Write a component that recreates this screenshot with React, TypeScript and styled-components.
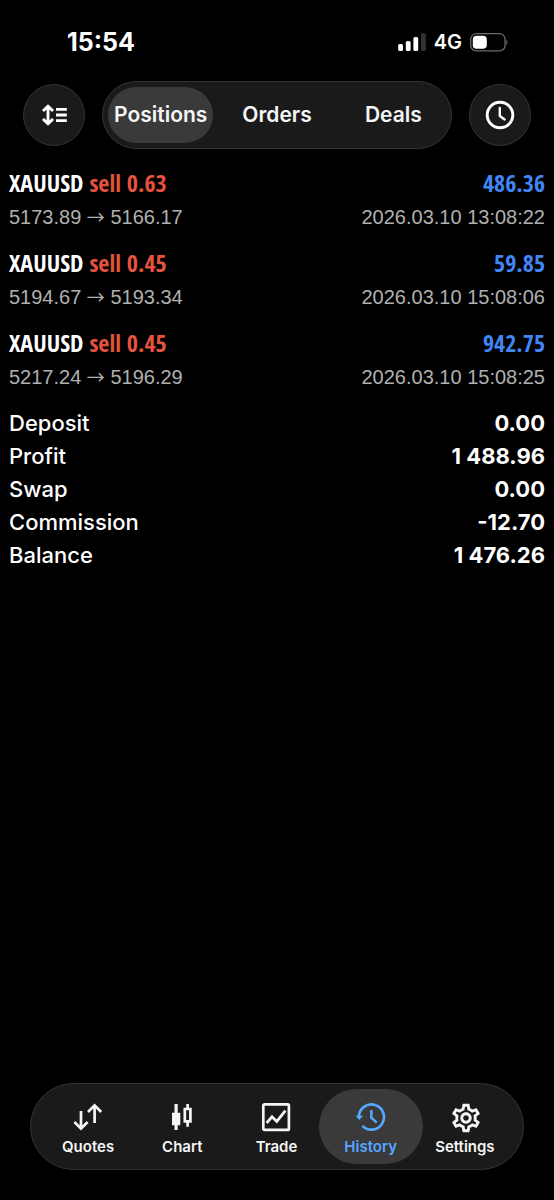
import React from "react";
import styled, { createGlobalStyle } from "styled-components";
import { MdOutlineSettings } from "react-icons/md";

const Global = createGlobalStyle`
  * { box-sizing: border-box; }
  html, body, #root { height: 100%; }
  body { margin: 0; background: #000; color: #fff; font-family: Inter, sans-serif; }
  button { font: inherit; color: inherit; border: 0; background: none; padding: 0; cursor: pointer; }
  svg { display: block; }
`;

const surface = "#1a1a1a";
const highlight = "#3a3a3a";
const outline = "#333";

const Screen = styled.div`
  display: flex;
  flex-direction: column;
  min-height: 100%;
`;

const StatusBar = styled.header`
  display: flex;
  align-items: center;
  justify-content: space-between;
  padding: 26px 46px 0 67px;
`;

const Clock = styled.time`
  font-size: 25px;
  line-height: 32px;
  font-weight: 700;
`;

const StatusIcons = styled.div`
  display: flex;
  align-items: center;
  gap: 8px;
`;

const Network = styled.span`
  font-size: 20px;
  line-height: 30px;
  font-weight: 600;
`;

const Toolbar = styled.div`
  display: flex;
  align-items: center;
  justify-content: space-between;
  gap: 17px;
  padding: 23px 23px 0;
`;

const RoundButton = styled.button`
  display: grid;
  place-items: center;
  flex: none;
  width: 62px;
  height: 62px;
  border-radius: 50%;
  background: ${surface};
  border: 1px solid ${outline};
`;

const Segments = styled.div`
  display: grid;
  grid-template-columns: repeat(3, 1fr);
  gap: 11px;
  flex: 1;
  height: 68px;
  padding: 5px;
  border-radius: 34px;
  background: ${surface};
  border: 1px solid ${outline};
`;

const Segment = styled.button<{ $active?: boolean }>`
  border-radius: 28px;
  font-size: 21px;
  font-weight: 600;
  line-height: 28px;
  color: #f5f5f5;
  background: ${(p) => (p.$active ? highlight : "transparent")};
`;

const Content = styled.main`
  flex: 1;
  padding: 18px 9px;
`;

const List = styled.ul`
  list-style: none;
  margin: 0;
  padding: 0;
`;

const Position = styled.li`
  padding-bottom: 12px;
`;

const Row = styled.div`
  display: flex;
  justify-content: space-between;
`;

const Title = styled(Row)`
  font-family: "Open Sans Condensed", "Roboto Condensed", sans-serif;
  font-size: 24px;
  line-height: 32px;
  font-weight: 700;
`;

const Side = styled.span`
  color: #e5533f;
`;

const Gain = styled.span`
  color: #4285f4;
`;

const Detail = styled(Row)`
  font-family: "Liberation Sans", Arial, sans-serif;
  font-size: 20px;
  line-height: 36px;
  color: #b0b0b0;
`;

const Arrow = styled.span`
  font-family: "Noto Sans CJK SC", sans-serif;
  font-size: 18px;
  line-height: 20px;
`;

const Totals = styled.dl`
  margin: 0;
`;

const Total = styled(Row)`
  font-size: 22px;
  line-height: 33px;
`;

const Label = styled.dt`
  font-weight: 500;
`;

const Amount = styled.dd`
  margin: 0;
  font-weight: 700;
`;

const TabBar = styled.nav`
  display: grid;
  grid-template-columns: repeat(5, 1fr);
  margin: 0 30px 30px;
  height: 87px;
  padding: 5px 11px 5px 10px;
  border-radius: 44px;
  background: ${surface};
  border: 1px solid ${outline};
`;

const Tab = styled.button<{ $active?: boolean }>`
  display: flex;
  flex-direction: column;
  align-items: center;
  justify-content: center;
  gap: 4px;
  margin: 0 -5px;
  padding-top: 4px;
  border-radius: 38px;
  font-size: 15px;
  line-height: 20px;
  font-weight: 600;
  color: ${(p) => (p.$active ? "#55a8ff" : "#f5f5f5")};
  background: ${(p) => (p.$active ? highlight : "transparent")};
`;

const TabIcon = styled.span`
  display: grid;
  place-items: center;
  width: 32px;
  height: 32px;
`;

const SignalIcon = () => (
  <svg width="28" height="18" viewBox="0 0 28 18" fill="#fff" aria-hidden="true">
    <rect x="0.2" y="11" width="4.8" height="7" rx="1.6" />
    <rect x="7.8" y="8" width="4.8" height="10" rx="1.6" />
    <rect x="15.4" y="4" width="4.8" height="14" rx="1.6" />
    <rect x="23" y="0.2" width="4.8" height="17.8" rx="1.6" fill="#333" />
  </svg>
);

const BatteryIcon = () => (
  <svg width="38" height="19" viewBox="0 0 38 19" aria-hidden="true">
    <rect x="0.7" y="0.7" width="34.4" height="17.2" rx="5.6" fill="none" stroke="#6b6b6b" strokeWidth="1.3" />
    <rect x="2.8" y="2.8" width="14" height="13" rx="3.8" fill="#fff" />
    <path d="M36.4 6.8c1.5.7 1.5 4.5 0 5.2z" fill="#6b6b6b" />
  </svg>
);

const SortIcon = () => (
  <svg width="28" height="28" viewBox="0 0 28 28" fill="none" stroke="#fff" strokeWidth="2.9" aria-hidden="true">
    <path d="M8 5.5v17M3 10l5-4.8 5 4.8M3 18l5 4.8 5-4.8" />
    <path d="M16 8.4h10.8M16 14h10.8M16 19.6h10.8" />
  </svg>
);

const ClockIcon = () => (
  <svg width="30" height="30" viewBox="0 0 30 30" fill="none" stroke="#fff" strokeLinecap="round" strokeLinejoin="round" aria-hidden="true">
    <circle cx="15" cy="15" r="12.8" strokeWidth="2.9" />
    <path d="M14.8 8v8l4.8 3.4" strokeWidth="2.4" />
  </svg>
);

const QuotesIcon = () => (
  <svg width="32" height="32" viewBox="0 0 32 32" fill="none" stroke="currentColor" strokeWidth="2.7" aria-hidden="true">
    <path d="M9 10v17M2.4 21l6.6 6.6 6.6-6.6" />
    <path d="M22.6 22V5M16 11l6.6-6.6 6.6 6.6" />
  </svg>
);

const ChartIcon = () => (
  <svg width="32" height="32" viewBox="0 0 32 32" aria-hidden="true">
    <path d="M8.5 3h3.2v8.7h2.6v12.6h-2.6V29H8.5v-4.7H6V11.7h2.5z" fill="currentColor" />
    <path d="M18.8 8h5.6v12.4h-5.6zM21.6 3v5M21.6 20.4v5.4" fill="none" stroke="currentColor" strokeWidth="2.7" />
  </svg>
);

const TradeIcon = () => (
  <svg width="32" height="32" viewBox="0 0 32 32" fill="none" stroke="currentColor" strokeWidth="2.7" aria-hidden="true">
    <rect x="3.3" y="3.3" width="25.6" height="25.6" rx="1.2" />
    <path d="M6.6 22l5.4-6.2 4.8 4.6 8.6-10.8" />
  </svg>
);

const HistoryIcon = () => (
  <svg width="32" height="32" viewBox="0 0 32 32" fill="none" stroke="currentColor" strokeWidth="2.7" aria-hidden="true">
    <path d="M3.8 15.6A12.6 12.6 0 1 1 7.4 24.9" />
    <path d="M0.5 14.7h7.6l-3.8 4.4z" fill="currentColor" stroke="none" />
    <path d="M16.3 9v7.6l5.4 5" strokeWidth="2.5" />
  </svg>
);

const SettingsIcon = () => <MdOutlineSettings size={34} aria-hidden="true" />;

const positions = [
  { id: 1, lot: "0.63", open: "5173.89", close: "5166.17", profit: "486.36", time: "2026.03.10 13:08:22" },
  { id: 2, lot: "0.45", open: "5194.67", close: "5193.34", profit: "59.85", time: "2026.03.10 15:08:06" },
  { id: 3, lot: "0.45", open: "5217.24", close: "5196.29", profit: "942.75", time: "2026.03.10 15:08:25" },
];

const totals = [
  { label: "Deposit", amount: "0.00" },
  { label: "Profit", amount: "1 488.96" },
  { label: "Swap", amount: "0.00" },
  { label: "Commission", amount: "-12.70" },
  { label: "Balance", amount: "1 476.26" },
];

const segments = ["Positions", "Orders", "Deals"];

const tabs = [
  { label: "Quotes", Icon: QuotesIcon },
  { label: "Chart", Icon: ChartIcon },
  { label: "Trade", Icon: TradeIcon },
  { label: "History", Icon: HistoryIcon },
  { label: "Settings", Icon: SettingsIcon },
];

export default function App() {
  return (
    <Screen>
      <Global />
      <StatusBar>
        <Clock>15:54</Clock>
        <StatusIcons>
          <SignalIcon />
          <Network>4G</Network>
          <BatteryIcon />
        </StatusIcons>
      </StatusBar>
      <Toolbar>
        <RoundButton type="button" aria-label="Sort">
          <SortIcon />
        </RoundButton>
        <Segments>
          {segments.map((name) => (
            <Segment key={name} type="button" $active={name === "Positions"} aria-pressed={name === "Positions"}>
              {name}
            </Segment>
          ))}
        </Segments>
        <RoundButton type="button" aria-label="Period">
          <ClockIcon />
        </RoundButton>
      </Toolbar>
      <Content>
        <List>
          {positions.map((p) => (
            <Position key={p.id}>
              <Title>
                <span>
                  XAUUSD <Side>sell {p.lot}</Side>
                </span>
                <Gain>{p.profit}</Gain>
              </Title>
              <Detail>
                <span>
                  {p.open} <Arrow>→</Arrow> {p.close}
                </span>
                <time>{p.time}</time>
              </Detail>
            </Position>
          ))}
        </List>
        <Totals>
          {totals.map((t) => (
            <Total key={t.label}>
              <Label>{t.label}</Label>
              <Amount>{t.amount}</Amount>
            </Total>
          ))}
        </Totals>
      </Content>
      <TabBar>
        {tabs.map(({ label, Icon }) => (
          <Tab key={label} type="button" $active={label === "History"} aria-current={label === "History" ? "page" : undefined}>
            <TabIcon>
              <Icon />
            </TabIcon>
            {label}
          </Tab>
        ))}
      </TabBar>
    </Screen>
  );
}
